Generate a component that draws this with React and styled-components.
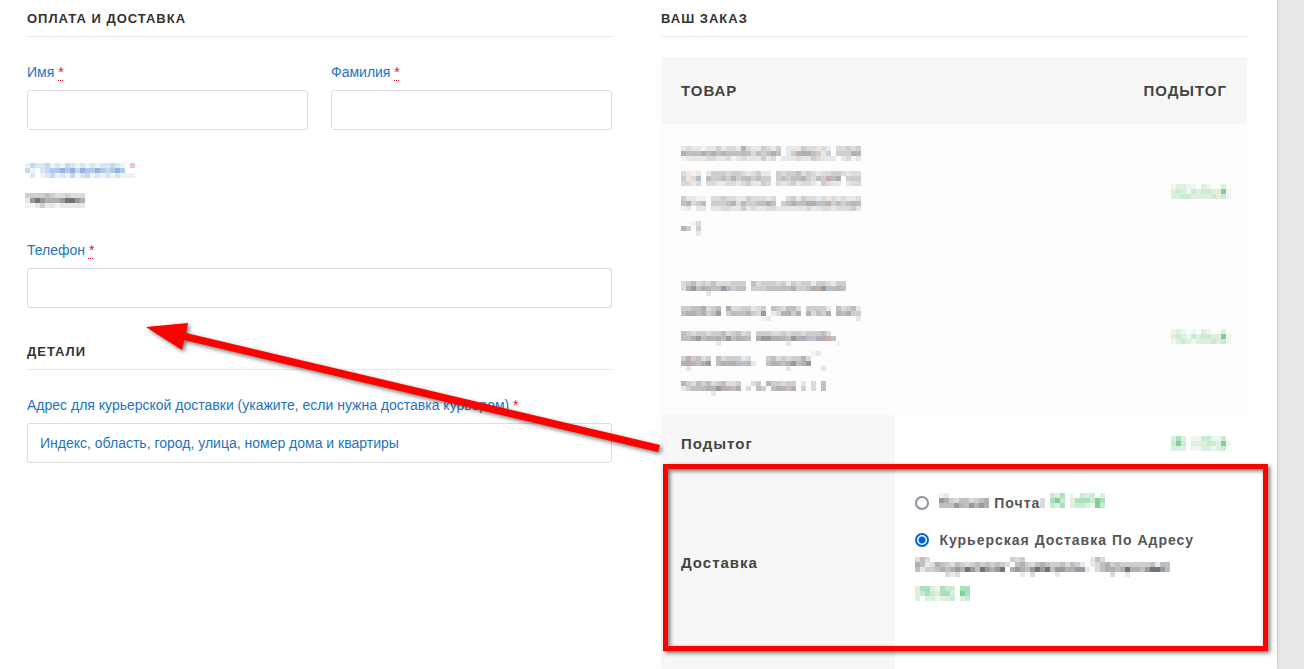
import React from 'react';
import styled, { createGlobalStyle } from 'styled-components';

const GlobalStyle = createGlobalStyle`
  *, *::before, *::after { box-sizing: border-box; }
  body {
    margin: 0;
    background: #e8e8e8;
    font-family: "Liberation Sans", Arial, sans-serif;
    font-size: 14px;
    color: #444;
  }
`;

const Page = styled.main`
  position: relative;
  display: grid;
  grid-template-columns: 585fr 586fr;
  column-gap: 49px;
  align-items: start;
  min-height: 100vh;
  margin-right: 27px;
  padding: 0 30px 0 27px;
  background: #fff;
  box-shadow: 0 0 3px rgba(0, 0, 0, 0.25);
`;

const Billing = styled.form`
  display: flex;
  flex-direction: column;
  gap: 25px;
`;

const Order = styled.section`
  display: flex;
  flex-direction: column;
  gap: 20px;
`;

const Heading = styled.h3`
  margin: 0;
  padding-top: 2px;
  border-bottom: 1px solid #e8e8e8;
  font-size: 13px;
  line-height: 34px;
  letter-spacing: 1px;
  text-transform: uppercase;
  color: #333;
`;

const FieldRow = styled.div`
  display: grid;
  grid-template-columns: 1fr 1fr;
  gap: 23px;
`;

const Field = styled.div`
  display: flex;
  flex-direction: column;
  gap: 8px;
  min-width: 0;
`;

const Label = styled.label`
  font-size: 14px;
  line-height: 20px;
  color: #1e73be;
`;

const Required = styled.abbr`
  color: #e2112b;
  text-decoration: underline dotted 1px;
  text-underline-offset: 3px;
`;

const TextInput = styled.input`
  width: 100%;
  height: 40px;
  padding: 0 12px;
  border: 1px solid #ddd;
  border-radius: 3px;
  background: #fff;
  font: inherit;
  color: #1e73be;

  &::placeholder { color: #1e73be; opacity: 1; }
`;

const Country = styled.div`
  display: flex;
  flex-direction: column;
  gap: 15px;
  margin-left: -2px;
  padding: 8px 0 7px;
`;

const Table = styled.table`
  width: 100%;
  border-collapse: collapse;
  table-layout: fixed;
  font-size: 15px;
  line-height: 25px;
  letter-spacing: 1px;
`;

const LabelCol = styled.col`
  width: 40%;
`;

const ColumnHead = styled.th`
  padding: 21px 20px;
  background: #f7f7f7;
  text-align: ${(p) => (p.$end ? 'right' : 'left')};
  text-transform: uppercase;
`;

const ProductCell = styled.td`
  padding: 17px 16px 16px 20px;
  background: #fdfdfd;
`;

const Lines = styled.div`
  display: flex;
  flex-direction: column;
  gap: 10px;
  padding: ${(p) => (p.$low ? '7px 0 3px' : '5px 0')};
`;

const TotalHead = styled.th`
  height: ${(p) => (p.$tail ? 16 : 57)}px;
  padding: 0 20px;
  background: #f7f7f7;
  text-align: left;
`;

const TotalCell = styled.td`
  padding: 0 16px 0 20px;
`;

const ShippingCell = styled.td`
  padding: 18px 20px 45px;
  font-size: 14px;
  font-weight: bold;
  line-height: 27px;
  color: #555;
`;

const Methods = styled.ul`
  display: flex;
  flex-direction: column;
  gap: 10px;
  margin: 0;
  padding: 0;
  list-style: none;
`;

const Radio = styled.input`
  appearance: none;
  width: 14px;
  height: 14px;
  margin: 0 10px 0 0;
  border: 2px solid #8f8f9d;
  border-radius: 50%;
  background: #fff;
  vertical-align: -2px;

  &:checked {
    border-color: #0060df;
    background: radial-gradient(circle, #0060df 3px, #fff 4px);
  }
`;

const BlockMosaic = styled.svg`
  display: block;
  flex: none;
  margin-top: ${(p) => (p.$tall ? -5 : 0)}px;
  margin-left: ${(p) => (p.$end ? 'auto' : 0)};
`;

const InlineMosaic = styled.svg`
  display: inline-block;
  vertical-align: ${(p) => -(p.$drop || 0)}px;
`;

const Annotation = styled.svg`
  position: absolute;
  top: 0;
  left: 0;
  pointer-events: none;
  filter: drop-shadow(2px 2px 2px rgba(0, 0, 0, 0.55));
`;

const PALETTE = {
  1: '#f3f3f3', 2: '#e7e7e8', 3: '#dbdbdb', 4: '#cfcecf', 5: '#c1c0c1',
  6: '#b0afb1', 7: '#9b999d', 8: '#757277',
  w: '#f0e6de', W: '#c0b2a9', c: '#e2ebf1', C: '#b5bfc9',
  a: '#edf7ef', b: '#dbf0e1', e: '#c9ead3', g: '#aae0bc', G: '#80cf94', y: '#e5edd7',
  i: '#edf3fa', j: '#d9e6f4', k: '#c4d8ee', l: '#aecce9', m: '#93b4df',
  p: '#f8bcc7', q: '#fdebed',
};

const CELL = 5;

// Censored text: each string is one row of square cells, a dot is an empty cell.
function Mosaic({ rows, inline, drop, end }) {
  const cells = rows.flatMap((row, y) =>
    [...row].map((c, x) =>
      c === '.' ? null : (
        <rect key={`${x}-${y}`} x={x * CELL} y={y * CELL} width={CELL} height={CELL} fill={PALETTE[c]} />
      ),
    ),
  );
  const size = {
    width: Math.max(...rows.map((row) => row.length)) * CELL,
    height: rows.length * CELL,
    shapeRendering: 'crispEdges',
    'aria-hidden': true,
  };
  return inline ? (
    <InlineMosaic $drop={drop} {...size}>{cells}</InlineMosaic>
  ) : (
    <BlockMosaic $tall={rows.length > 3} $end={end} {...size}>{cells}</BlockMosaic>
  );
}

const COUNTRY_LABEL = [
  'ikjjkijikjijijijjkji.p',
  'ki.jkllmlmkmllmlklml..',
  '.j.ijkijikijkijijijiqq',
];
const COUNTRY_VALUE = [
  '444454334333',
  'w78766678876',
  '1124c2122222',
];

const PRODUCTS = [
  {
    lines: [
      ['w3c212242332W32w43c4.c2w433w3c.33434', '65C56565W555C5354565.24W6654w4.4446W', '1w22233223123w22423.2w232243222.2312'],
      ['3w1w.244434432342c.43445343233443233', '4w3C.54454W45C4544.45455W4354WC6.444', '33c3.3322332342243.3234233214322.233'],
      ['42211.334332c433323..34w433c323232c3', '5W34C.4445W3C445565.456556655W4C45WC', '1w.22.2233224232233222w223c233233342'],
      ['..13', 'W4.4', '...2'],
    ],
    price: ['abbaa.ba..b.', 'bebaebeebyGa', 'bbeebybbeye1'],
  },
  {
    lines: [
      ['34C3435333444.5344434c4344c443w44', '36756W5C7C455.444555C564456W7C5W5', '.....2...........................'],
      ['4455634C.63344w34.543553.4444c.5345c', '56656457.4C55W437.w3W646.W3546.W5644', '................1w.................2'],
      ['54344344C34534.444334344344453..', '556756W6C756W5.67766W5766C566W5.', '.......2.............2.........1'],
      ['..........................12..', '4W4534.53444c3...4534344W3..', '66W567.56W6C5C2..56W567C67..', '.2...................2......2'],
      ['W43C45345334..34.W44344.2.3.5', 'w455C6W76W56.3.54.56W5W.4.3.5', '......2......................'],
    ],
    price: ['aba.a.ba..b.', 'yebaebeebyGa', 'abebaybbebea'],
  },
];

const SUBTOTAL = ['bgb.aaeeaae.', 'eGe.bybeebGa', 'bbb.aabbaye.'];
const POST_NAME = ['12........', '7643553456', '5557W57W76'];
const POST_TAIL = ['.', '3', '3'];
const POST_PRICE = ['eyg.a.ebe.b', 'gGe.ygggeGg', 'ebg.beebaGe'];
const COURIER_NAME = [
  '353................434.............w53.............',
  '65c3654354345454543.5643565445354c.c356454444445cC5',
  '5w4456567687587678.676578785776677c.35665686657887C',
  '......3c3............2.3....2..........3..2........',
];
const COURIER_PRICE = ['yggbagee.gg', 'yegeyggb.Gg', 'b.bbaybe.be'];

function FormField({ id, label, placeholder, type = 'text' }) {
  return (
    <Field>
      <Label htmlFor={id}>
        {label} <Required title="обязательно">*</Required>
      </Label>
      <TextInput id={id} type={type} placeholder={placeholder} />
    </Field>
  );
}

export default function App() {
  return (
    <>
      <GlobalStyle />
      <Page>
        <Billing>
          <Heading>Оплата и доставка</Heading>
          <FieldRow>
            <FormField id="first-name" label="Имя" />
            <FormField id="last-name" label="Фамилия" />
          </FieldRow>
          <Country>
            <Mosaic rows={COUNTRY_LABEL} />
            <Mosaic rows={COUNTRY_VALUE} />
          </Country>
          <FormField id="phone" label="Телефон" type="tel" />
          <Heading>Детали</Heading>
          <FormField
            id="address"
            label="Адрес для курьерской доставки (укажите, если нужна доставка курьером)"
            placeholder="Индекс, область, город, улица, номер дома и квартиры"
          />
        </Billing>

        <Order>
          <Heading>Ваш заказ</Heading>
          <Table>
            <colgroup>
              <LabelCol />
              <col />
            </colgroup>
            <thead>
              <tr>
                <ColumnHead scope="col">Товар</ColumnHead>
                <ColumnHead scope="col" $end>Подытог</ColumnHead>
              </tr>
            </thead>
            <tbody>
              {PRODUCTS.map((product, i) => (
                <tr key={i}>
                  <ProductCell>
                    <Lines $low={i > 0}>
                      {product.lines.map((rows, n) => (
                        <Mosaic key={n} rows={rows} />
                      ))}
                    </Lines>
                  </ProductCell>
                  <ProductCell>
                    <Mosaic rows={product.price} end />
                  </ProductCell>
                </tr>
              ))}
            </tbody>
            <tfoot>
              <tr>
                <TotalHead scope="row">Подытог</TotalHead>
                <TotalCell><Mosaic rows={SUBTOTAL} end /></TotalCell>
              </tr>
              <tr>
                <TotalHead scope="row">Доставка</TotalHead>
                <ShippingCell>
                  <Methods>
                    <li>
                      <Radio type="radio" name="shipping" id="ship-post" />
                      <label htmlFor="ship-post">
                        <Mosaic rows={POST_NAME} inline /> Почта
                        <Mosaic rows={POST_TAIL} inline /> <Mosaic rows={POST_PRICE} inline />
                      </label>
                    </li>
                    <li>
                      <Radio type="radio" name="shipping" id="ship-courier" defaultChecked />
                      <label htmlFor="ship-courier">
                        Курьерская Доставка По Адресу <Mosaic rows={COURIER_NAME} inline drop={5} />{' '}
                        <Mosaic rows={COURIER_PRICE} inline drop={2} />
                      </label>
                    </li>
                  </Methods>
                </ShippingCell>
              </tr>
              <tr>
                <TotalHead $tail />
                <TotalCell />
              </tr>
            </tfoot>
          </Table>
        </Order>

        <Annotation width="1277" height="669" aria-hidden="true">
          <path d="M146 327 L188 323 L186 333 L660 445 L658 452 L184 340 L182 350 Z" fill="#f00" />
          <rect x="665.5" y="466.5" width="600" height="182" fill="none" stroke="#f00" strokeWidth="5" />
        </Annotation>
      </Page>
    </>
  );
}
